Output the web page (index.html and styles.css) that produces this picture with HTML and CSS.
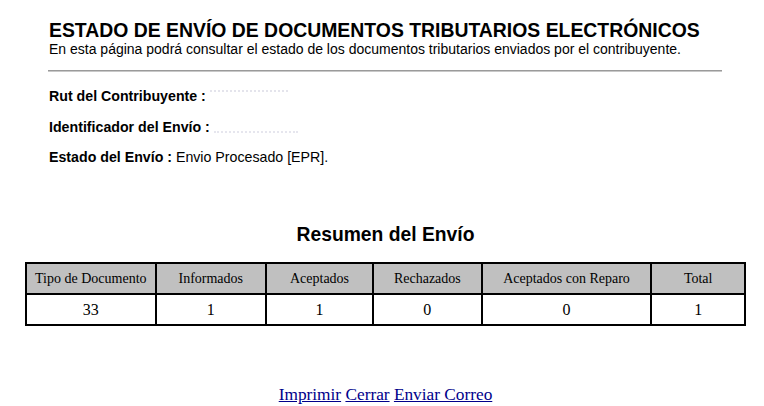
FILE: index.html
```html
<!DOCTYPE html>
<html lang="es">
<head>
<meta charset="utf-8">
<link rel="stylesheet" href="styles.css">
</head>
<body>
<div class="page">
  <header class="head">
    <h1 class="title">ESTADO DE ENVÍO DE DOCUMENTOS TRIBUTARIOS ELECTRÓNICOS</h1>
    <p class="subtitle">En esta página podrá consultar el estado de los documentos tributarios enviados por el contribuyente.</p>
    <hr class="rule">
  </header>
  <section class="info">
    <p class="row"><b>Rut del Contribuyente :</b> <span class="masked m1"></span></p>
    <p class="row"><b>Identificador del Envío :</b> <span class="masked m2"></span></p>
    <p class="row"><b>Estado del Envío :</b> Envio Procesado [EPR].</p>
  </section>
  <h2 class="summary">Resumen del Envío</h2>
  <table class="grid">
    <thead>
      <tr>
        <th class="c1">Tipo de Documento</th>
        <th class="c2">Informados</th>
        <th class="c3">Aceptados</th>
        <th class="c4">Rechazados</th>
        <th class="c5">Aceptados con Reparo</th>
        <th class="c6">Total</th>
      </tr>
    </thead>
    <tbody>
      <tr>
        <td>33</td>
        <td>1</td>
        <td>1</td>
        <td>0</td>
        <td>0</td>
        <td>1</td>
      </tr>
    </tbody>
  </table>
  <nav class="links">
    <a href="#">Imprimir</a> <a href="#">Cerrar</a> <a href="#">Enviar Correo</a>
  </nav>
</div>
</body>
</html>
```
FILE: styles.css
```css
html, body {
  margin: 0;
  padding: 0;
  background: #fff;
}
.page {
  padding: 0 18px 0 25px;
  font-family: "Liberation Serif", "Times New Roman", serif;
  color: #000;
}
.head {
  padding: 19px 24px 0 24px;
}
.title {
  margin: 0;
  font-family: "Liberation Sans", Arial, sans-serif;
  font-size: 19.4px;
  font-weight: bold;
  line-height: 22px;
}
.subtitle {
  margin: 0;
  font-family: "Liberation Sans", Arial, sans-serif;
  font-size: 14px;
  line-height: 16px;
}
.rule {
  margin: 13px 0 0 -1px;
  border: 0;
  border-top: 1px solid #9a9a9a;
  border-bottom: 1px solid #c8c8c8;
  height: 0;
}
.info {
  padding: 16px 0 0 24px;
  font-family: "Liberation Sans", Arial, sans-serif;
  font-size: 14.2px;
}
.row {
  margin: 0 0 14.5px 0;
  line-height: 16px;
}
.masked {
  display: inline-block;
  height: 10px;
  vertical-align: top;
  border-top: 2px dotted #e4e4ec;
  margin-top: 2px;
}
.m1 { width: 78px; }
.m2 { width: 84px; border-top: 0; border-bottom: 2px dotted #e6e6ee; }
.summary {
  margin: 59px 0 16px 0;
  text-align: center;
  font-family: "Liberation Sans", Arial, sans-serif;
  font-size: 19.3px;
  font-weight: bold;
  line-height: 22px;
}
.grid {
  width: 721px;
  border-collapse: collapse;
  border: 2px solid #000;
  font-size: 14px;
}
.grid th, .grid td {
  border: 2px solid #000;
  text-align: center;
  font-weight: normal;
  padding: 0;
  height: 29px;
}
.grid th {
  background: #c0c0c0;
}
.c1 { width: 130px; }
.c2 { width: 110px; }
.c3 { width: 107px; }
.c4 { width: 108px; }
.c5 { width: 172px; }
.c6 { width: 94px; }
.grid td {
  font-size: 16px;
}
.links {
  margin-top: 59px;
  text-align: center;
  font-size: 17.3px;
}
.links a {
  color: #00008b;
  text-decoration: underline;
}
```
